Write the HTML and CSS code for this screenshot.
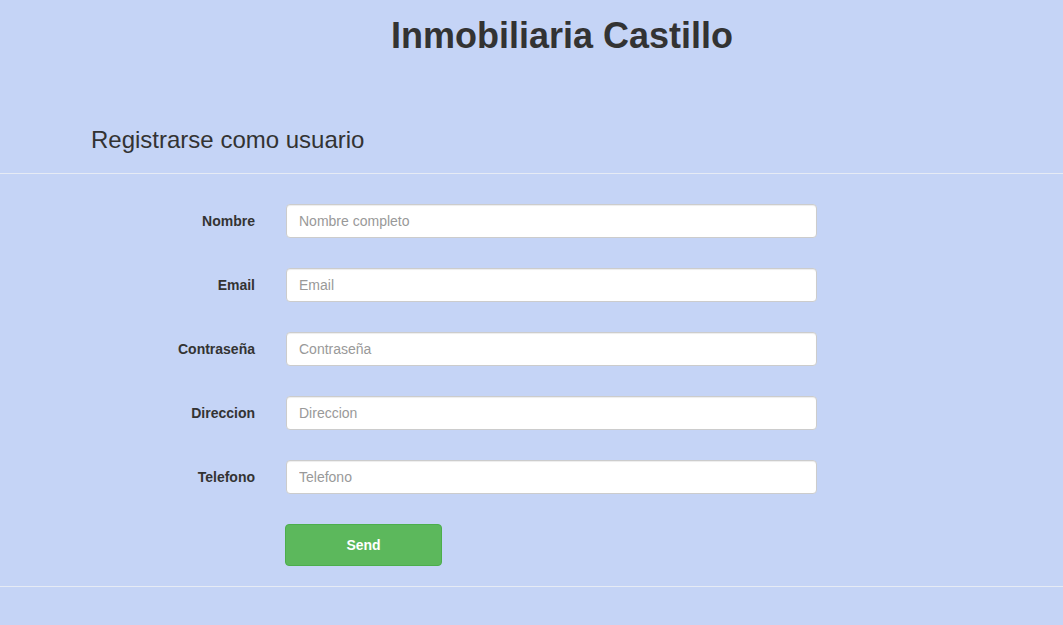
FILE: index.html
```html
<!DOCTYPE html>
<html lang="es">
<head>
<meta charset="utf-8">
<title>Inmobiliaria Castillo</title>
<link rel="stylesheet" href="styles.css">
</head>
<body>
<header class="site-header">
  <h1 class="site-title">Inmobiliaria Castillo</h1>
</header>
<main class="register">
  <h3 class="section-title">Registrarse como usuario</h3>
  <hr class="divider">
  <form class="form-horizontal">
    <div class="form-row">
      <label class="form-label" for="nombre">Nombre</label>
      <input class="form-input" id="nombre" type="text" placeholder="Nombre completo">
    </div>
    <div class="form-row">
      <label class="form-label" for="email">Email</label>
      <input class="form-input" id="email" type="email" placeholder="Email">
    </div>
    <div class="form-row">
      <label class="form-label" for="pass">Contraseña</label>
      <input class="form-input" id="pass" type="password" placeholder="Contraseña">
    </div>
    <div class="form-row">
      <label class="form-label" for="dir">Direccion</label>
      <input class="form-input" id="dir" type="text" placeholder="Direccion">
    </div>
    <div class="form-row">
      <label class="form-label" for="tel">Telefono</label>
      <input class="form-input" id="tel" type="text" placeholder="Telefono">
    </div>
    <div class="form-row">
      <span class="form-label"></span>
      <button class="btn-send" type="submit">Send</button>
    </div>
  </form>
  <hr class="divider divider-bottom">
</main>
</body>
</html>
```

FILE: styles.css
```css
html, body {
  margin: 0;
  padding: 0;
}
body {
  background: #c5d4f6;
  font-family: "Liberation Sans", Arial, Helvetica, sans-serif;
  font-size: 14px;
  line-height: 20px;
  color: #333;
  min-height: 625px;
}
.site-header {
  padding-left: 61px;
}
.site-title {
  margin: 16px 0 0;
  font-size: 36px;
  line-height: 40px;
  font-weight: bold;
  text-align: center;
  color: #333;
}
.section-title {
  margin: 71px 0 20px 91px;
  font-size: 24px;
  line-height: 26px;
  font-weight: normal;
  color: #333;
}
.divider {
  margin: 0;
  border: 0;
  border-top: 1px solid #e6ebf5;
  height: 0;
}
.form-horizontal {
  display: flex;
  flex-direction: column;
  gap: 30px;
  padding: 30px 0 20px;
}
.form-row {
  display: flex;
  align-items: flex-start;
  gap: 16px;
}
.form-label {
  width: 255px;
  padding-right: 15px;
  padding-top: 7px;
  text-align: right;
  font-weight: bold;
  flex: none;
}
.form-input {
  box-sizing: border-box;
  width: 531px;
  height: 34px;
  padding: 6px 12px;
  font-family: inherit;
  font-size: 14px;
  line-height: 20px;
  color: #555;
  background: #fff;
  border: 1px solid #ccc;
  border-radius: 4px;
  box-shadow: inset 0 1px 1px rgba(0,0,0,0.075);
  margin: 0;
}
.form-input::placeholder {
  color: #999;
}
.btn-send {
  box-sizing: border-box;
  width: 157px;
  height: 42px;
  margin-left: -1px;
  background: #5cb85c;
  border: 1px solid #4cae4c;
  border-radius: 4px;
  color: #fff;
  font-family: inherit;
  font-size: 14px;
  font-weight: bold;
  cursor: pointer;
}
```
